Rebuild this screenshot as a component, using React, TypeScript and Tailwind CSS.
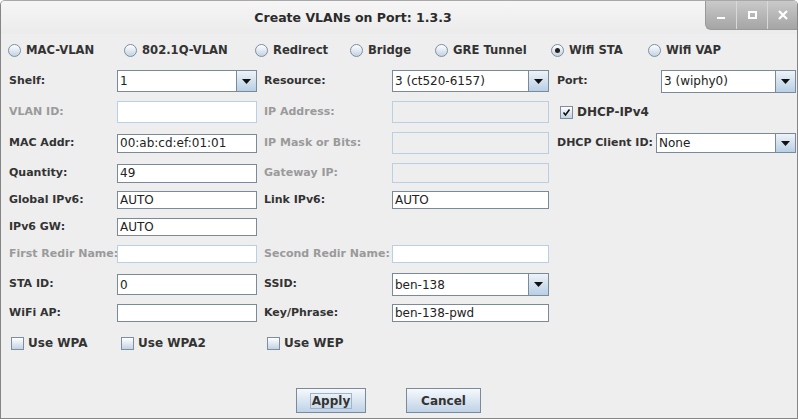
import React from "react";

type P = { className?: string; children?: React.ReactNode };

function Radio({ label, checked, className }: { label: string; checked?: boolean; className?: string }) {
  return (
    <div className={"flex items-center gap-[5px] shrink-0 " + (className ?? "")}>
      <span className="w-[13px] h-[13px] rounded-full border border-[#7d8ea0] bg-linear-to-b from-[#ffffff] to-[#c3d3e3] flex items-center justify-center">
        {checked && <span className="w-[5px] h-[5px] rounded-full bg-[#222222]" />}
      </span>
      <span className="font-bold text-[11.6px] text-[#333333] whitespace-nowrap">{label}</span>
    </div>
  );
}

function Label({ text, disabled, className }: { text: string; disabled?: boolean; className?: string }) {
  return (
    <div
      className={
        "shrink-0 font-bold text-[11px] whitespace-nowrap " +
        (disabled ? "text-[#9a9a9a] " : "text-[#333333] ") +
        (className ?? "")
      }
    >
      {text}
    </div>
  );
}

function Field({
  value,
  disabled,
  white,
  className,
}: {
  value?: string;
  disabled?: boolean;
  white?: boolean;
  className?: string;
}) {
  return (
    <div
      className={
        "shrink-0 flex items-center pl-[2px] text-[12px] text-[#222222] whitespace-nowrap overflow-hidden " +
        (disabled
          ? (white ? "bg-white " : "bg-[#eeeeee] ") + "border border-[#b8cfe5] "
          : "bg-white border border-[#7a8a99] ") +
        (className ?? "")
      }
    >
      {value}
    </div>
  );
}

function Arrow() {
  return (
    <svg width="9" height="5" viewBox="0 0 9 5">
      <polygon points="0,0 9,0 4.5,5" fill="#111" />
    </svg>
  );
}

function Combo({ value, className }: { value: string; className?: string }) {
  return (
    <div className={"shrink-0 flex border border-[#7a8a99] bg-white " + (className ?? "")}>
      <div className="flex-1 flex items-center pl-[2px] text-[12px] text-[#222222] whitespace-nowrap overflow-hidden">
        {value}
      </div>
      <div className="w-[20px] border-l border-[#7a8a99] bg-linear-to-b from-[#eef3f8] to-[#b8cfe5] flex items-center justify-center">
        <Arrow />
      </div>
    </div>
  );
}

function Check({ label, checked, className }: { label: string; checked?: boolean; className?: string }) {
  return (
    <div className={"flex items-center gap-[4px] shrink-0 " + (className ?? "")}>
      <span className="w-[13px] h-[13px] border border-[#7d8ea0] bg-linear-to-b from-[#ffffff] to-[#c3d3e3] flex items-center justify-center">
        {checked && (
          <svg width="9" height="9" viewBox="0 0 9 9">
            <path d="M1.5 4.5 L3.5 7 L7.5 1.5" stroke="#111" strokeWidth="1.6" fill="none" />
          </svg>
        )}
      </span>
      <span className="font-bold text-[12px] text-[#333333] whitespace-nowrap">{label}</span>
    </div>
  );
}

function Row({ className, children }: P) {
  return <div className={"flex items-center pl-[8px] " + (className ?? "")}>{children}</div>;
}

export default function App() {
  return (
    <div className="w-[798px] h-[419px] overflow-hidden bg-[#eeeeee] border border-t-[#a8a8a8] border-[#858585] rounded-tl-[5px] rounded-tr-[5px] font-['DejaVu_Sans',sans-serif] flex flex-col">
      {/* Title bar */}
      <div className="h-[33px] shrink-0 flex bg-linear-to-b from-[#f6f6f6] to-[#ebebeb]">
        <div className="flex-1 flex items-center justify-center pt-[2px]">
          <span className="font-bold text-[12.5px] text-[#2b2b2b]">Create VLANs on Port: 1.3.3</span>
        </div>
        <div className="flex h-[30px] -mt-px -mr-px rounded-bl-[6px] overflow-hidden bg-linear-to-b from-[#cbcbcb] to-[#a5a5a5] border-l border-b border-[#9a9a9a]">
          <div className="w-[30px] flex items-end justify-center pb-[10px]">
            <div className="w-[8px] h-[2px] bg-white" />
          </div>
          <div className="w-[31px] border-l border-[#d8d8d8] flex items-center justify-center">
            <div className="w-[9px] h-[8px] border-2 border-white" />
          </div>
          <div className="w-[31px] border-l border-[#d8d8d8] flex items-center justify-center">
            <svg width="10" height="10" viewBox="0 0 10 10">
              <path d="M1 1 L9 9 M9 1 L1 9" stroke="#fff" strokeWidth="2.2" />
            </svg>
          </div>
        </div>
      </div>

      {/* Radio row */}
      <div className="h-[20px] mt-[7px] flex items-center pl-[7px]">
        <Radio label="MAC-VLAN" className="w-[116px]" />
        <Radio label="802.1Q-VLAN" className="w-[131px]" />
        <Radio label="Redirect" className="w-[95px]" />
        <Radio label="Bridge" className="w-[85px]" />
        <Radio label="GRE Tunnel" className="w-[116px]" />
        <Radio label="Wifi STA" checked className="w-[97px]" />
        <Radio label="Wifi VAP" />
      </div>

      {/* Form */}
      <Row className="h-[22px] mt-[9px]">
        <Label text="Shelf:" className="w-[108px]" />
        <Combo value="1" className="w-[140px] h-[22px]" />
        <Label text="Resource:" className="ml-[7px] w-[128px]" />
        <Combo value="3 (ct520-6157)" className="w-[157px] h-[22px]" />
        <Label text="Port:" className="ml-[8px] w-[104px]" />
        <Combo value="3 (wiphy0)" className="w-[135px] h-[23px]" />
      </Row>

      <Row className="h-[22px] mt-[9px]">
        <Label text="VLAN ID:" disabled className="w-[108px]" />
        <Field disabled white className="w-[140px] h-[22px]" />
        <Label text="IP Address:" disabled className="ml-[7px] w-[128px]" />
        <Field disabled className="w-[157px] h-[22px]" />
        <div className="ml-[11px]">
          <Check label="DHCP-IPv4" checked />
        </div>
      </Row>

      <Row className="h-[22px] mt-[9px]">
        <Label text="MAC Addr:" className="w-[108px]" />
        <Field value="00:ab:cd:ef:01:01" className="w-[140px] h-[19px]" />
        <Label text="IP Mask or Bits:" disabled className="ml-[7px] w-[128px]" />
        <Field disabled className="w-[157px] h-[22px]" />
        <Label text="DHCP Client ID:" className="ml-[8px] w-[99px]" />
        <Combo value="None" className="w-[140px] h-[20px]" />
      </Row>

      <Row className="h-[20px] mt-[9px]">
        <Label text="Quantity:" className="w-[108px]" />
        <Field value="49" className="w-[140px] h-[19px]" />
        <Label text="Gateway IP:" disabled className="ml-[7px] w-[128px]" />
        <Field disabled className="w-[157px] h-[20px]" />
      </Row>

      <Row className="h-[18px] mt-[8px]">
        <Label text="Global IPv6:" className="w-[108px]" />
        <Field value="AUTO" className="w-[140px] h-[18px]" />
        <Label text="Link IPv6:" className="ml-[7px] w-[128px]" />
        <Field value="AUTO" className="w-[157px] h-[18px]" />
      </Row>

      <Row className="h-[18px] mt-[9px]">
        <Label text="IPv6 GW:" className="w-[108px]" />
        <Field value="AUTO" className="w-[140px] h-[18px]" />
      </Row>

      <Row className="h-[18px] mt-[9px]">
        <Label text="First Redir Name:" disabled className="w-[108px]" />
        <Field disabled white className="w-[140px] h-[18px]" />
        <Label text="Second Redir Name:" disabled className="ml-[7px] w-[128px]" />
        <Field disabled white className="w-[157px] h-[18px]" />
      </Row>

      <Row className="h-[23px] mt-[10px]">
        <Label text="STA ID:" className="w-[108px]" />
        <Field value="0" className="w-[140px] h-[21px]" />
        <Label text="SSID:" className="ml-[7px] w-[128px]" />
        <Combo value="ben-138" className="w-[157px] h-[23px]" />
      </Row>

      <Row className="h-[18px] mt-[8px]">
        <Label text="WiFi AP:" className="w-[108px]" />
        <Field className="w-[140px] h-[18px]" />
        <Label text="Key/Phrase:" className="ml-[7px] w-[128px]" />
        <Field value="ben-138-pwd" className="w-[157px] h-[18px]" />
      </Row>

      <div className="h-[18px] mt-[12px] flex items-center pl-[10px]">
        <Check label="Use WPA" className="w-[110px]" />
        <Check label="Use WPA2" className="w-[146px]" />
        <Check label="Use WEP" />
      </div>

      {/* Buttons */}
      <div className="mt-[36px] flex pl-[295px] gap-[40px]">
        <button className="w-[70px] h-[25px] border border-[#7a8a99] bg-linear-to-b from-[#f6f9fc] to-[#bfd2e6] flex items-center justify-center">
          <span className="border border-[#9fb4ca] px-[1px] leading-[14px] font-bold text-[12px] text-[#333333]">Apply</span>
        </button>
        <button className="w-[75px] h-[25px] border border-[#7a8a99] bg-linear-to-b from-[#f6f9fc] to-[#bfd2e6] flex items-center justify-center font-bold text-[12px] text-[#333333]">
          Cancel
        </button>
      </div>
    </div>
  );
}
